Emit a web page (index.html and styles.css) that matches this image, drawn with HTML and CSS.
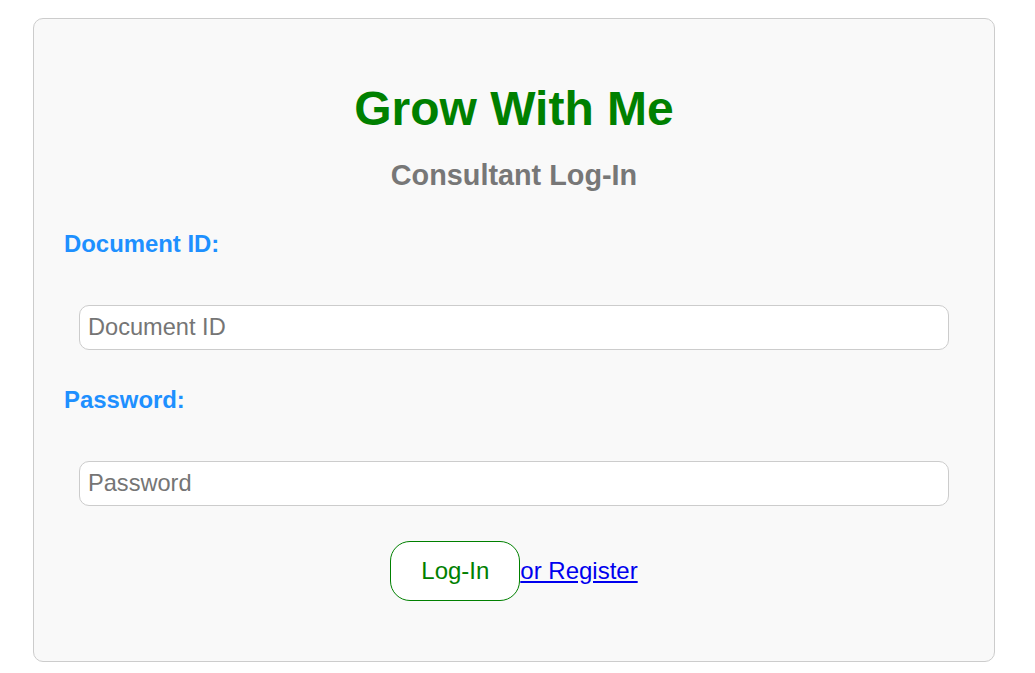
FILE: index.html
```html
<!DOCTYPE html>
<html lang="en">
<head>
<meta charset="utf-8">
<title>Grow With Me - Consultant Log-In</title>
<link rel="stylesheet" href="styles.css">
</head>
<body>
<div class="card">
  <h1 class="title">Grow With Me</h1>
  <h2 class="subtitle">Consultant Log-In</h2>
  <form class="form">
    <label class="label label-first" for="docid">Document ID:</label>
    <input class="field" id="docid" type="text" placeholder="Document ID">
    <label class="label" for="pwd">Password:</label>
    <input class="field" id="pwd" type="password" placeholder="Password">
    <div class="actions">
      <button class="btn" type="button">Log-In</button><a class="register" href="#">or Register</a>
    </div>
  </form>
</div>
</body>
</html>
```

FILE: styles.css
```css
html, body {
  background: #ffffff;
}
body {
  margin: 8px;
  font-family: "Liberation Sans", Arial, sans-serif;
}
.card {
  box-sizing: border-box;
  width: 962px;
  margin: 10px 0 0 25px;
  padding: 30px 29px 60px;
  background: #f9f9f9;
  border: 1px solid #cccccc;
  border-radius: 10px;
}
.title {
  margin: 32px 0 0;
  font-size: 48px;
  font-weight: bold;
  line-height: 55px;
  color: #008000;
  text-align: center;
}
.subtitle {
  margin: 23px 0 0;
  font-size: 28.8px;
  font-weight: bold;
  line-height: 33px;
  color: #777777;
  text-align: center;
}
.form {
  display: flex;
  flex-direction: column;
  margin: 0;
}
.label {
  display: block;
  margin-top: 35.5px;
  padding-left: 1px;
  font-size: 23.9px;
  font-weight: bold;
  line-height: 27px;
  color: #1e90ff;
}
.label-first {
  margin-top: 37.5px;
}
.field {
  box-sizing: border-box;
  height: 45px;
  margin: 48.5px 16px 0;
  padding: 8px 8px;
  font-family: "Liberation Sans", Arial, sans-serif;
  font-size: 23.6px;
  line-height: 27px;
  color: #222;
  background: #ffffff;
  border: 1px solid #cccccc;
  border-radius: 10px;
  outline: none;
}
.field::placeholder {
  color: #757575;
}
.actions {
  margin-top: 35px;
  text-align: center;
  font-size: 24px;
  line-height: 27px;
}
.btn {
  display: inline-block;
  box-sizing: border-box;
  vertical-align: baseline;
  width: 130px;
  height: 60px;
  padding: 15px 0 16px;
  font-family: "Liberation Sans", Arial, sans-serif;
  font-size: 24px;
  line-height: 27px;
  color: #008000;
  background: #ffffff;
  border: 1px solid #008000;
  border-radius: 20px;
  cursor: pointer;
}
.register {
  color: #0000ee;
  text-decoration: underline;
}
```
